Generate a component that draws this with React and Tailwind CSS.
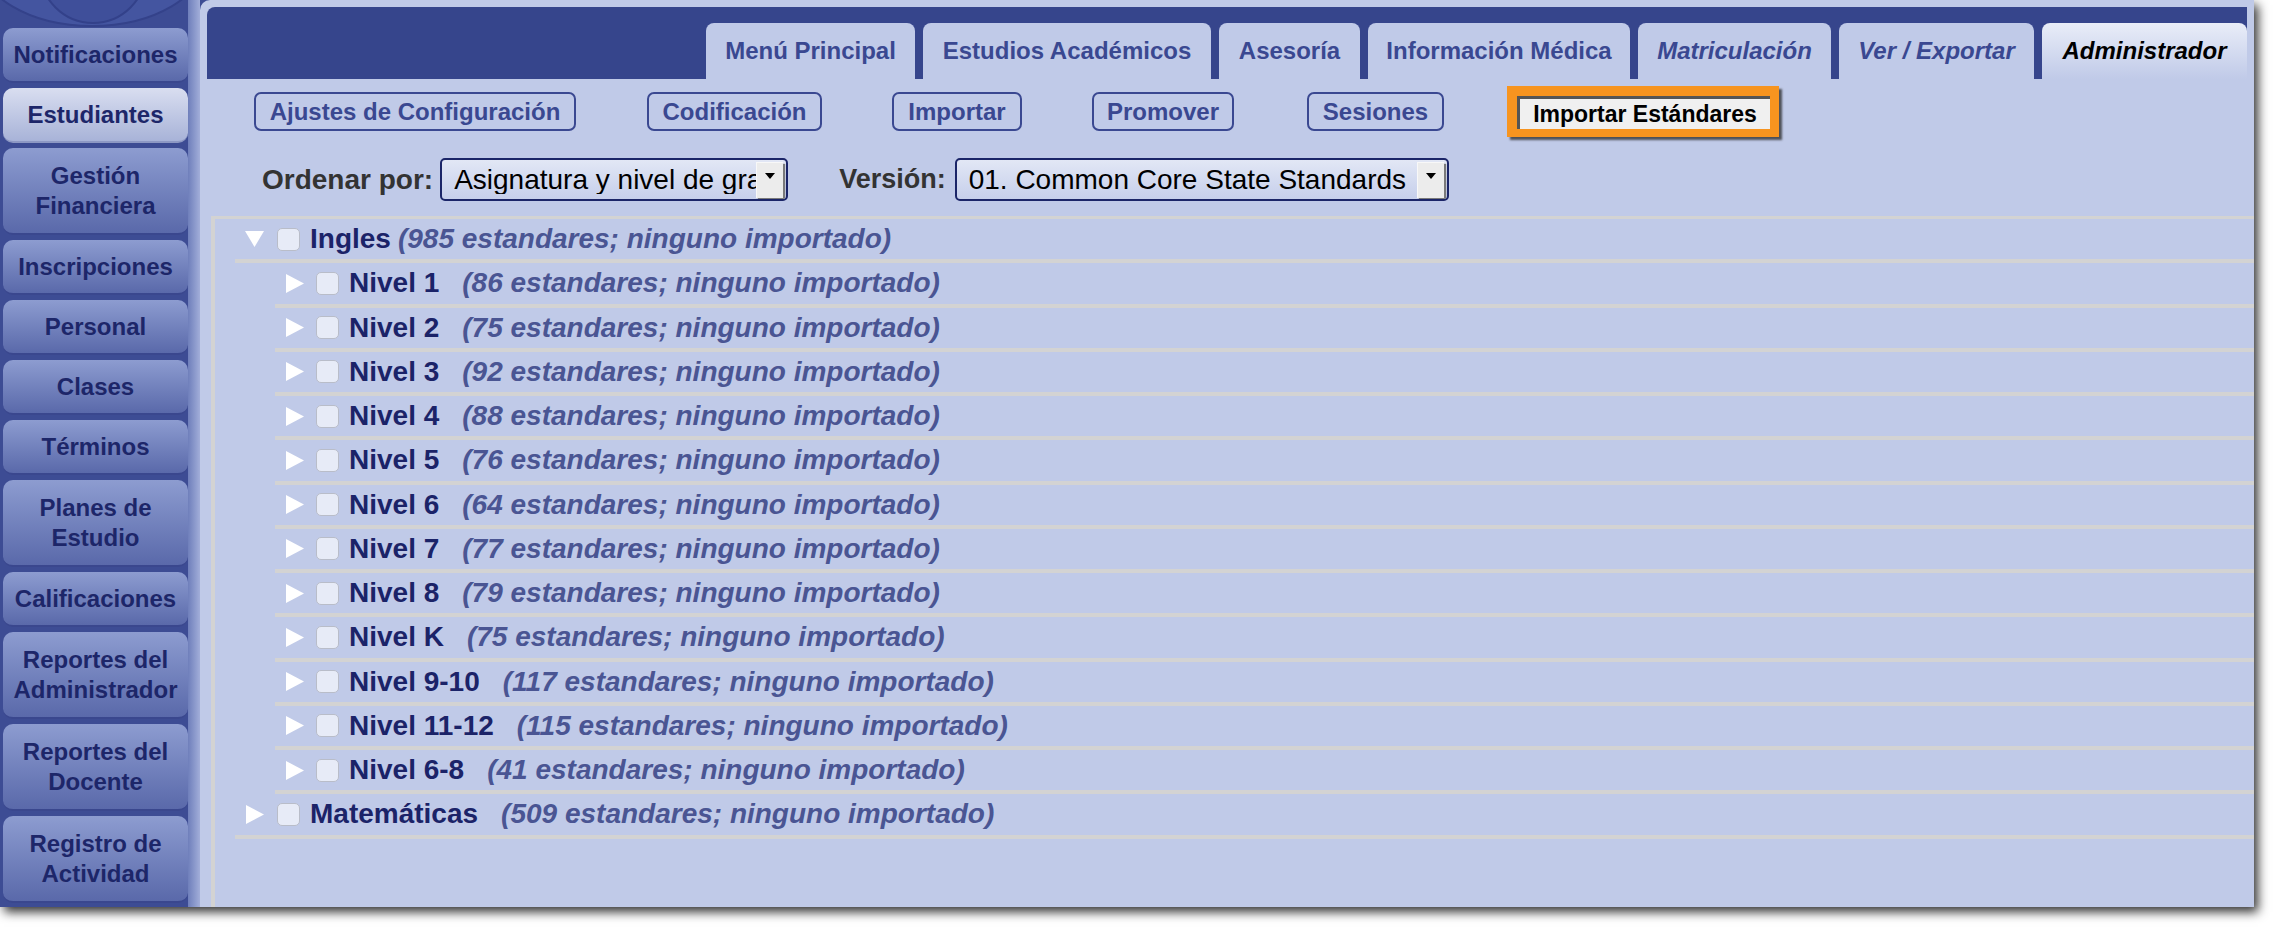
import React from "react";

const MENU = [
  { lines: ["Notificaciones"] },
  { lines: ["Estudiantes"], activo: true },
  { lines: ["Gestión", "Financiera"] },
  { lines: ["Inscripciones"] },
  { lines: ["Personal"] },
  { lines: ["Clases"] },
  { lines: ["Términos"] },
  { lines: ["Planes de", "Estudio"] },
  { lines: ["Calificaciones"] },
  { lines: ["Reportes del", "Administrador"] },
  { lines: ["Reportes del", "Docente"] },
  { lines: ["Registro de", "Actividad"] },
];

const TABS = [
  { label: "Menú Principal", w: "w-[209px]" },
  { label: "Estudios Académicos", w: "w-[288px]" },
  { label: "Asesoría", w: "w-[141px]" },
  { label: "Información Médica", w: "w-[262px]" },
  { label: "Matriculación", w: "w-[193px]", italic: true },
  { label: "Ver / Exportar", w: "w-[195px]", italic: true },
  { label: "Administrador", w: "w-[205px]", italic: true, activo: true },
];

const NIVELES = [
  ["Nivel 1", 86],
  ["Nivel 2", 75],
  ["Nivel 3", 92],
  ["Nivel 4", 88],
  ["Nivel 5", 76],
  ["Nivel 6", 64],
  ["Nivel 7", 77],
  ["Nivel 8", 79],
  ["Nivel K", 75],
  ["Nivel 9-10", 117],
  ["Nivel 11-12", 115],
  ["Nivel 6-8", 41],
];

function Triangulo({ abierto }) {
  return abierto ? (
    <svg width="19" height="18" viewBox="0 0 19 18" className="shrink-0">
      <polygon points="0,1 19,1 9.5,17" fill="#ffffff" />
    </svg>
  ) : (
    <svg width="19" height="19" viewBox="0 0 19 19" className="shrink-0">
      <polygon points="1,0 19,9.5 1,19" fill="#ffffff" />
    </svg>
  );
}

function Casilla() {
  return (
    <div className="w-[23px] h-[23px] shrink-0 rounded-[5px] border border-[#b9bdc9] bg-[#e7ebf7]" />
  );
}

function Fila({ nivel, abierto, nombre, cuenta, pegado }) {
  return (
    <div
      className={`flex items-center h-[44.25px] border-b-4 border-[#d3d3d3] ${
        nivel === 0 ? "ml-[20px] pl-[10px]" : "ml-[60px] pl-[10px]"
      }`}
    >
      <Triangulo abierto={abierto} />
      <div className={nivel === 0 ? "ml-[13px]" : "ml-[12px]"}>
        <Casilla />
      </div>
      <span className="ml-[10px] text-[28px] font-bold text-[#1b2368] whitespace-nowrap">
        {nombre}
      </span>
      <span
        className={`${pegado ? "ml-[7px]" : "ml-[23px]"} text-[28px] font-bold italic text-[#4a5593] whitespace-nowrap`}
      >
        ({cuenta} estandares; ninguno importado)
      </span>
    </div>
  );
}

function Selector({ texto, ancho, completo }) {
  return (
    <div
      className={`${ancho} h-[43px] flex items-center rounded-[5px] border-2 border-[#1b2568] bg-gradient-to-b from-[#e2e7f5] to-[#c6cfeb] pl-[12px] pr-[3px] overflow-hidden`}
    >
      <span
        className={`flex-1 whitespace-nowrap text-[28px] text-black leading-none ${
          completo ? "" : "overflow-hidden"
        }`}
      >
        {texto}
      </span>
      <div className="w-[27px] h-[36px] shrink-0 bg-[#ececec] border-l border-t border-[#f8f8f8] shadow-[2px_2px_1px_#7a7a7a] flex justify-center pt-[10px]">
        <svg width="10" height="6" viewBox="0 0 10 6">
          <polygon points="0,0 10,0 5,6" fill="#000" />
        </svg>
      </div>
    </div>
  );
}

export default function App() {
  return (
    <div className="w-[2274px] h-[928px] bg-white overflow-hidden font-['Liberation_Sans',Arial,sans-serif]">
      <div className="flex w-[2254px] h-[907px] bg-[#3d4c94] shadow-[4px_5px_10px_rgba(0,0,0,0.8)]">
        {/* barra lateral */}
        <aside className="w-[188px] shrink-0 flex flex-col">
          <svg width="188" height="28" viewBox="0 0 188 28" className="shrink-0">
            <ellipse cx="92" cy="-40" rx="112" ry="66" fill="#4455a0" stroke="#34428a" strokeWidth="2" />
            <circle cx="93" cy="-30" r="53" fill="#3f4f9a" stroke="#33418a" strokeWidth="2" />
          </svg>
          <div className="flex flex-col gap-[5px] pl-[3px]">
            {MENU.map((m) => (
              <div
                key={m.lines.join(" ")}
                className={`flex flex-col items-center justify-center rounded-[10px] border-b-2 ${
                  m.lines.length > 1 ? "h-[87px]" : "h-[55px]"
                } ${
                  m.activo
                    ? "bg-gradient-to-b from-[#d9def0] to-[#a8b3d8] border-[#8d98c4]"
                    : "bg-gradient-to-b from-[#8d9cd0] to-[#5a69aa] border-[#3a478e]"
                } text-[24px] font-bold text-[#1d2669] leading-[30px]`}
              >
                {m.lines.map((l) => (
                  <span key={l}>{l}</span>
                ))}
              </div>
            ))}
          </div>
        </aside>
        <div className="w-[12px] shrink-0 bg-gradient-to-r from-[#6f7fbb] to-[#a2aed9]" />

        {/* panel principal */}
        <main className="flex-1 bg-[#c0cae8] rounded-tl-[10px] flex flex-col pt-[7px] overflow-hidden">
          <div className="ml-[7px] mr-[7px] h-[72px] bg-[#36458c] rounded-tl-[8px] flex items-end justify-end gap-[8px]">
            {TABS.map((t) => (
              <div
                key={t.label}
                className={`${t.w} h-[56px] rounded-t-[8px] flex items-center justify-center text-[24px] font-bold ${
                  t.italic ? "italic" : ""
                } ${
                  t.activo
                    ? "bg-gradient-to-b from-[#e9edf8] to-[#c0cae8] text-black"
                    : "bg-[#c0cae8] text-[#3a4891]"
                }`}
              >
                {t.label}
              </div>
            ))}
          </div>

          <div className="flex items-center mt-[7px] ml-[54px] h-[51px]">
            {[
              ["Ajustes de Configuración", "w-[322px]", ""],
              ["Codificación", "w-[175px]", "ml-[71px]"],
              ["Importar", "w-[130px]", "ml-[70px]"],
              ["Promover", "w-[142px]", "ml-[70px]"],
              ["Sesiones", "w-[137px]", "ml-[73px]"],
            ].map(([label, w, ml]) => (
              <div
                key={label}
                className={`${w} ${ml} h-[39px] rounded-[7px] border-2 border-[#3a4891] flex items-center justify-center text-[24px] font-bold text-[#3a4891]`}
              >
                {label}
              </div>
            ))}
            <div className="ml-[63px] w-[272px] h-[51px] bg-[#f7941f] pl-[10px] pr-[9px] pt-[10px] pb-[8px] shadow-[3px_3px_2px_rgba(40,40,40,0.75)]">
              <div className="h-full bg-[#f0f0f0] border-l-[3px] border-t-[3px] border-[#555] flex items-center justify-center text-[23px] font-bold text-black">
                Importar Estándares
              </div>
            </div>
          </div>

          <div className="flex items-center mt-[21px] ml-[62px] h-[43px]">
            <span className="text-[28px] font-bold text-[#333]">Ordenar por:</span>
            <div className="ml-[7px]">
              <Selector texto="Asignatura y nivel de grado" ancho="w-[348px]" />
            </div>
            <span className="ml-[51px] text-[27px] font-bold text-[#333]">Versión:</span>
            <div className="ml-[9px]">
              <Selector texto="01. Common Core State Standards" ancho="w-[494px]" completo />
            </div>
          </div>

          <div className="mt-[15px] ml-[11px] flex-1 border-l-4 border-t-[3px] border-[#d3d3d3]">
            <Fila nivel={0} abierto nombre="Ingles" cuenta={985} pegado />
            {NIVELES.map(([n, c]) => (
              <Fila key={n} nivel={1} nombre={n} cuenta={c} />
            ))}
            <Fila nivel={0} nombre="Matemáticas" cuenta={509} />
          </div>
        </main>
      </div>
    </div>
  );
}
